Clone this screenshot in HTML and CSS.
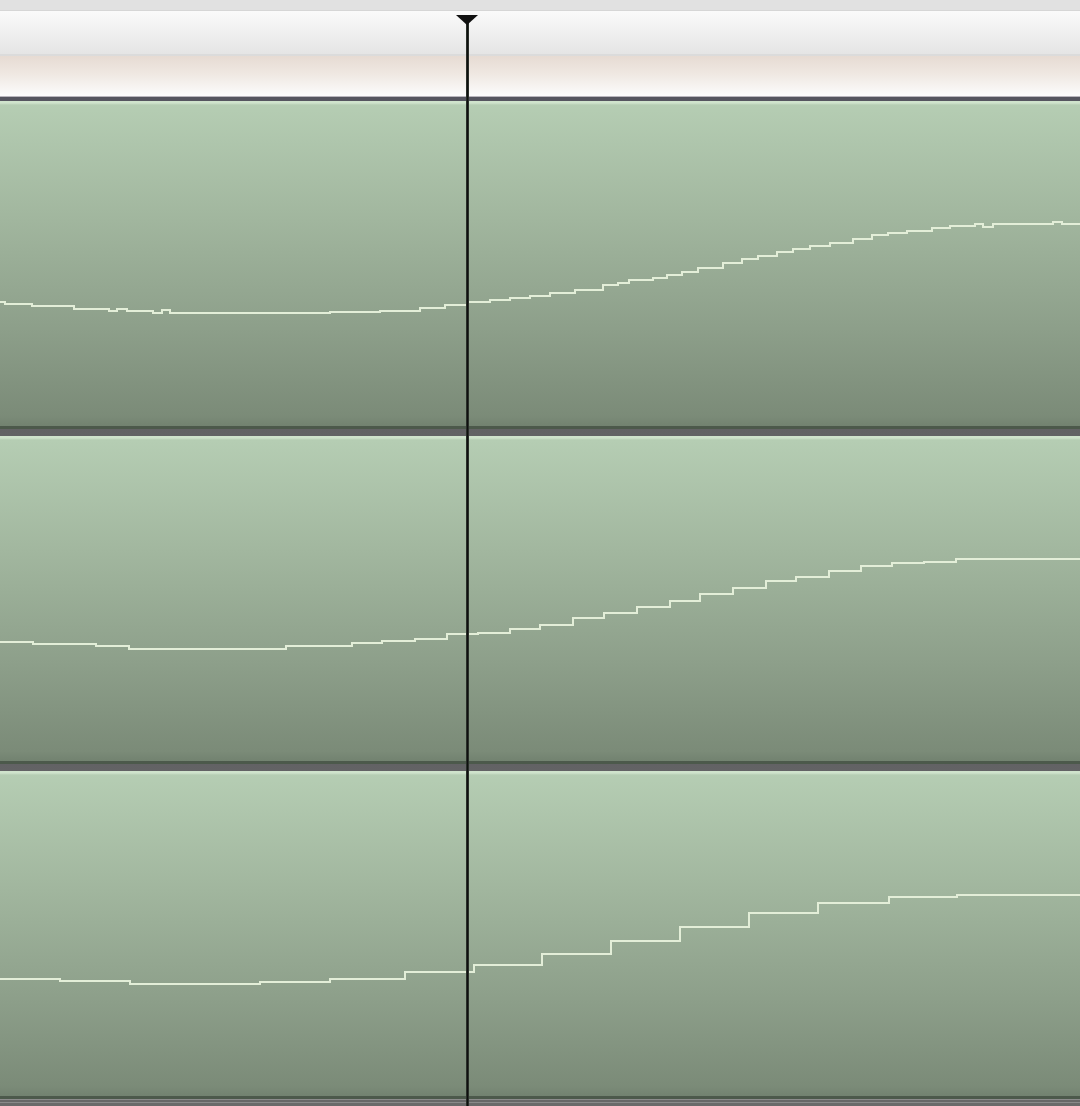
FILE: index.html
```html
<!DOCTYPE html>
<html>
<head>
  <title>Automation lanes</title>
  <link rel="stylesheet" href="styles.css">
</head>
<body>
<div class="timeline">

  <div class="ruler">
    <div class="ruler-strip"></div>
    <div class="ruler-band"></div>
    <div class="ruler-scale"></div>
  </div>

  <div class="lane">
    <svg class="curve" viewBox="0 0 1080 325" width="1080" height="325">
      <path d="M0 201 H5 V203 H32 V205 H74 V208 H109 V210 H117 V208 H127 V210 H153 V212 H162 V209 H170 V212 H330 V211 H380 V210 H420 V207 H445 V204 H467 V201 H490 V199 H510 V197 H530 V195 H550 V192 H575 V189 H603 V184 H618 V182 H629 V179 H653 V177 H667 V174 H682 V171 H698 V167 H723 V162 H742 V158 H758 V155 H777 V151 H793 V148 H810 V145 H830 V142 H853 V138 H872 V134 H888 V132 H907 V130 H932 V127 H950 V125 H975 V123 H983 V126 H993 V123 H1053 V121 H1062 V123 H1080"/>
    </svg>
  </div>
  <div class="divider"></div>

  <div class="lane">
    <svg class="curve" viewBox="0 0 1080 325" width="1080" height="325">
      <path d="M0 206 H33 V208 H96 V210 H129 V213 H286 V210 H352 V207 H382 V205 H415 V203 H447 V198 H478 V197 H510 V193 H540 V189 H573 V182 H604 V177 H637 V171 H670 V165 H700 V158 H733 V152 H766 V145 H796 V141 H829 V135 H861 V130 H892 V127 H924 V126 H956 V123 H1080"/>
    </svg>
  </div>
  <div class="divider"></div>

  <div class="lane">
    <svg class="curve" viewBox="0 0 1080 325" width="1080" height="325">
      <path d="M0 208 H60 V210 H130 V213 H260 V211 H330 V208 H405 V201 H474 V194 H542 V183 H611 V170 H680 V156 H749 V142 H818 V132 H889 V126 H957 V124 H1080"/>
    </svg>
  </div>
  <div class="divider divider-last"></div>

  <!-- playhead sits over the ruler and all lanes -->
  <div class="playhead"></div>
</div>
</body>
</html>
```

FILE: styles.css
```css
body {
  margin: 0;
  background: #7a8a77;
  overflow: hidden;
  font-family: "Liberation Sans", Arial, sans-serif;
}

.timeline {
  position: relative;
  width: 1080px;
  height: 1106px;
  display: flex;
  flex-direction: column;
}

/* ruler at the top */
.ruler {
  display: flex;
  flex-direction: column;
  border-bottom: 4px solid #55555f;
}

.ruler-strip {
  height: 10px;
  background-color: #e1e1e1;
  border-bottom: 1px solid #d6d6d6;
}

.ruler-band {
  height: 43px;
  background: linear-gradient(to bottom, #fafafa, #e5e5e5);
  border-bottom: 2px solid #dbdbdb;
}

.ruler-scale {
  height: 40px;
  background: linear-gradient(to bottom, #e6dbd3, #efe8e2 45%, #fcfcfc);
  border-bottom: 1px solid #b9b6bd;
}

/* automation lanes */
.lane {
  height: 325px;
  flex-shrink: 0;
  background: linear-gradient(to bottom,
    #cfe3cc 0, #cfe3cc 2px,
    #b5cdb3 4px,
    #a2b79f 35%,
    #8d9f8a 70%,
    #7b8b78 97%,
    #728270 100%);
}

.curve {
  display: block;
}

.curve path {
  fill: none;
  stroke: #e3eed8;
  stroke-width: 2;
  shape-rendering: crispEdges;
}

.divider {
  height: 10px;
  flex-shrink: 0;
  background: linear-gradient(to bottom, #4c594b 0, #4c594b 3px, #626264 3px, #636365 100%);
}

.divider-last {
  background: linear-gradient(to bottom,
    #4c594b 0, #4c594b 3px,
    #8c8c8c 3px, #8c8c8c 4px,
    #676767 4px, #676767 6px,
    #8a8a8a 6px, #8a8a8a 7px,
    #6a6a6a 7px);
}

/* playhead */
.playhead {
  position: absolute;
  left: 466px;
  top: 15px;
  bottom: 0;
  width: 3px;
  background: linear-gradient(to right, #3c463c, #0f0f0f 40%, #0f0f0f 60%, #3c463c);
}

.playhead::before {
  content: "";
  position: absolute;
  top: 0;
  left: -10px;
  border-left: 11px solid transparent;
  border-right: 11px solid transparent;
  border-top: 10px solid #111;
}
```
